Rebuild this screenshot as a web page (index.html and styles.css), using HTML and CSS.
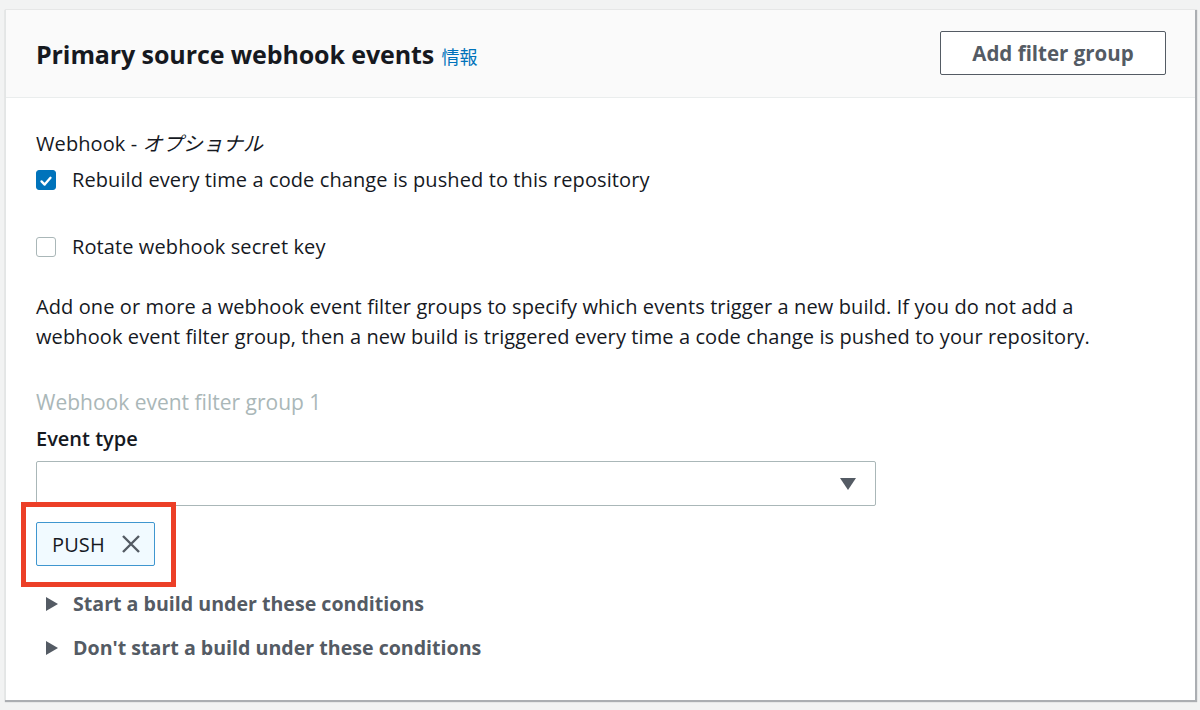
FILE: index.html
```html
<!DOCTYPE html>
<html>
<head>
<meta charset="utf-8">
<link rel="stylesheet" href="styles.css">
</head>
<body>
<div class="card">
  <div class="card-header">
    <h2 class="title">Primary source webhook events <a class="info">情報</a></h2>
    <button class="btn">Add filter group</button>
  </div>
  <div class="card-body">
    <div class="field-label">Webhook - <i>オプショナル</i></div>
    <div class="check-row">
      <span class="checkbox checked"><svg viewBox="0 0 20 20" width="20" height="20"><path d="M5 10.5 L8.5 14 L15 6.5" fill="none" stroke="#fff" stroke-width="2.6" stroke-linecap="round" stroke-linejoin="round"/></svg></span>
      <span>Rebuild every time a code change is pushed to this repository</span>
    </div>
    <div class="check-row second">
      <span class="checkbox"></span>
      <span>Rotate webhook secret key</span>
    </div>
    <p class="desc">Add one or more a webhook event filter groups to specify which events trigger a new build. If you do not add a webhook event filter group, then a new build is triggered every time a code change is pushed to your repository.</p>
    <div class="group-title">Webhook event filter group 1</div>
    <div class="field-label strong">Event type</div>
    <div class="select"><span class="caret"></span></div>
    <div class="token-wrap">
      <div class="token">PUSH <svg class="x" viewBox="0 0 20 20" width="20" height="20"><path d="M2 2 L18 18 M18 2 L2 18" stroke="#545b64" stroke-width="2.4" fill="none"/></svg></div>
      <div class="highlight"></div>
    </div>
    <div class="expand"><span class="tri"></span>Start a build under these conditions</div>
    <div class="expand"><span class="tri"></span>Don't start a build under these conditions</div>
  </div>
</div>
</body>
</html>
```
FILE: styles.css
```css
html, body {
  margin: 0;
  padding: 0;
}
body {
  background: #f2f3f3;
  padding: 10px 5px 10px 5px;
  font-family: "Open Sans", "Noto Sans CJK JP", sans-serif;
  color: #16191f;
}
.card {
  background: #fff;
  height: 690px;
  border-left: 1px solid #e3e6e6;
  box-shadow: 1px 1px 1px 1px rgba(84, 91, 100, 0.45);
  box-sizing: border-box;
}
.card-header {
  height: 88px;
  box-sizing: border-box;
  background: #fafafa;
  border-bottom: 1px solid #eaeded;
  display: flex;
  align-items: center;
  justify-content: space-between;
  padding: 0 29px 0 30px;
}
.title {
  margin: 0;
  font-size: 25px;
  font-weight: 700;
  color: #16191f;
  letter-spacing: -0.1px;
}
.info {
  font-size: 18px;
  font-weight: 400;
  color: #0073bb;
  margin-left: 1px;
  letter-spacing: 0;
}
.btn {
  width: 226px;
  height: 44px;
  border: 1px solid #545b64;
  border-radius: 2px;
  background: #fff;
  color: #545b64;
  font-family: inherit;
  font-size: 20.5px;
  font-weight: 700;
  margin-top: -2px;
}
.card-body {
  padding: 32px 30px 0 30px;
  font-size: 20px;
  letter-spacing: 0.1px;
}
.field-label {
  line-height: 28px;
}
.field-label i {
  font-style: italic;
}
.check-row {
  display: flex;
  align-items: center;
  gap: 16px;
  line-height: 28px;
  margin-top: 8px;
}
.check-row.second {
  margin-top: 39px;
}
.checkbox {
  width: 20px;
  height: 20px;
  box-sizing: border-box;
  border: 1px solid #aab7b8;
  border-radius: 3px;
  display: inline-flex;
  flex: none;
}
.checkbox.checked {
  background: #0073bb;
  border-color: #0073bb;
}
.desc {
  margin: 31px 0 0 0;
  line-height: 30px;
  max-width: 1100px;
}
.group-title {
  margin-top: 35px;
  color: #aab7b8;
  font-size: 21px;
  line-height: 30px;
  letter-spacing: 0;
}
.field-label.strong {
  margin-top: 8px;
  font-weight: 600;
  letter-spacing: 0;
}
.select {
  margin-top: 8px;
  width: 840px;
  height: 45px;
  box-sizing: border-box;
  border: 1px solid #aab7b8;
  border-radius: 2px;
  display: flex;
  align-items: center;
  justify-content: flex-end;
  padding-right: 19px;
}
.caret {
  width: 0;
  height: 0;
  border-left: 8px solid transparent;
  border-right: 8px solid transparent;
  border-top: 12px solid #545b64;
}
.token-wrap {
  position: relative;
  margin-top: 16px;
  height: 44px;
}
.token {
  display: inline-flex;
  align-items: center;
  gap: 16px;
  height: 44px;
  box-sizing: border-box;
  padding: 0 13px 0 15px;
  background: #f1faff;
  border: 1px solid #3f96cf;
  border-radius: 2px;
}
.x {
  flex: none;
}
.highlight {
  position: absolute;
  left: -15px;
  top: -20px;
  width: 155px;
  height: 85px;
  box-sizing: border-box;
  border: 5px solid #ec3f27;
}
.expand {
  display: flex;
  align-items: center;
  font-weight: 700;
  color: #545b64;
  line-height: 30px;
  padding-left: 10px;
  font-size: 19.6px;
  letter-spacing: 0;
}
.token-wrap + .expand {
  margin-top: 23px;
}
.expand + .expand {
  margin-top: 14px;
}
.tri {
  width: 0;
  height: 0;
  border-top: 7px solid transparent;
  border-bottom: 7px solid transparent;
  border-left: 12px solid #545b64;
  margin-right: 15px;
}
```
